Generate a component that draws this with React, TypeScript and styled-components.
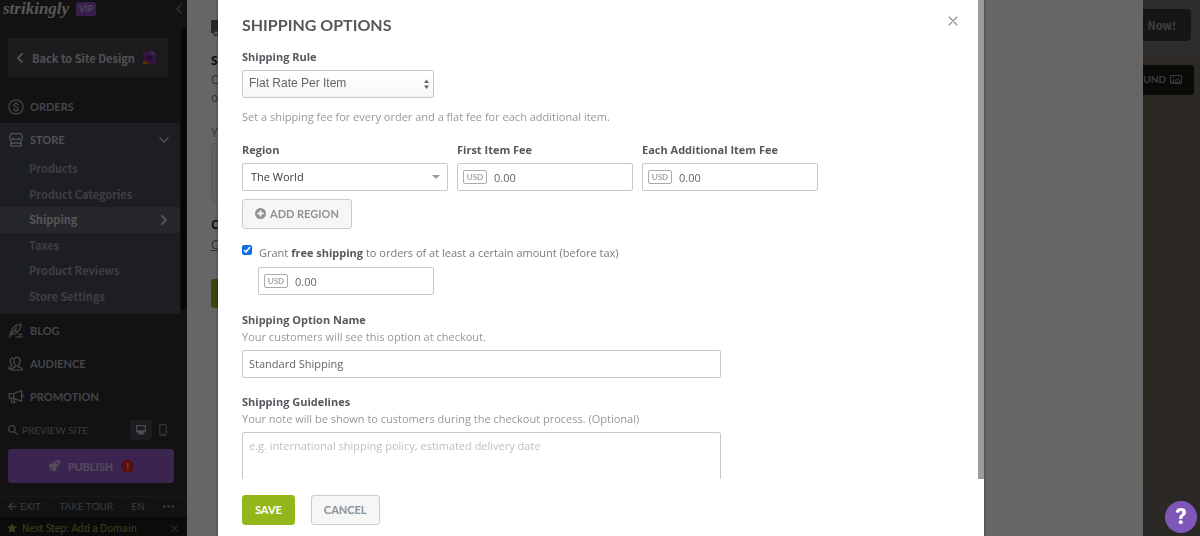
import React from "react";
import styled, { createGlobalStyle } from "styled-components";

const display = `Lato, "Liberation Sans", sans-serif`;
const body = `"Open Sans", "Liberation Sans", sans-serif`;
const menu = `"Noto Sans CJK SC", "Open Sans", sans-serif`;

const Global = createGlobalStyle`
  *, *::before, *::after { box-sizing: border-box; }
  html, body { margin: 0; height: 100%; overflow: hidden; }
  body { font-family: ${body}; font-size: 11px; line-height: 17px; color: #636569; background: #fff; }
  button, input, select, textarea { font: inherit; color: inherit; margin: 0; }
  svg { display: block; flex: none; }
`;

/* ---------- page shell ---------- */

const Shell = styled.div`
  display: grid;
  grid-template-columns: 187px minmax(0, 1fr) 57px;
  height: 100vh;
`;

const Sidebar = styled.aside`
  display: flex;
  flex-direction: column;
  min-height: 0;
  background: #2f2f31;
  color: #b3b4ba;
  overflow: hidden;
`;

const Brand = styled.header`
  display: flex;
  align-items: center;
  gap: 7px;
  height: 18px;
  padding: 0 5px 0 3px;
  & > svg { margin-left: auto; }
`;

const Wordmark = styled.span`
  font-family: "Liberation Serif", serif;
  font-style: italic;
  font-weight: 700;
  font-size: 17px;
  line-height: 18px;
  color: #d6d6da;
`;

const Vip = styled.span`
  width: 20px;
  height: 14px;
  border-radius: 2px;
  background: #8a50bd;
  color: #d9c6ee;
  font-family: ${display};
  font-size: 9px;
  line-height: 14px;
  text-align: center;
`;

const SideScroll = styled.div`
  display: grid;
  grid-template-columns: 180px 5px;
  gap: 1px;
  flex: 1;
  align-content: start;
  padding-top: 10px;
`;

const SideThumb = styled.div`
  height: 282px;
  border-radius: 3px;
  background: #101010;
`;

const SideNav = styled.nav`
  display: flex;
  flex-direction: column;
  padding-top: 10px;
`;

const BackLink = styled.a`
  display: flex;
  align-items: center;
  gap: 8px;
  height: 39px;
  margin: 0 12px 13px 8px;
  padding: 0 12px 0 9px;
  border-radius: 2px;
  background: #46484f;
  color: #c6c7cc;
  font-family: ${menu};
  font-weight: 700;
  font-size: 11px;
  line-height: 18px;
  text-decoration: none;
  white-space: nowrap;
  & > svg:last-child { margin-left: auto; }
`;

const MainLink = styled.a<{ $bright?: boolean }>`
  display: flex;
  align-items: center;
  gap: 6px;
  height: 33px;
  padding: 0 11px 0 8px;
  color: ${(p) => (p.$bright ? "#c9cad0" : "#a9abb2")};
  font-family: ${display};
  font-weight: 700;
  font-size: 11px;
  text-decoration: none;
  & > svg:nth-of-type(2) { margin-left: auto; }
`;

const Group = styled.div`
  padding-bottom: 5px;
  background: #494b54;
`;

const SubList = styled.div`
  display: grid;
  grid-auto-rows: 1fr;
  height: 153px;
`;

const SubLink = styled.a<{ $active?: boolean }>`
  display: flex;
  align-items: center;
  justify-content: space-between;
  padding: 0 12px 0 29px;
  background: ${(p) => (p.$active ? "#5d6169" : "transparent")};
  color: ${(p) => (p.$active ? "#d0d1d5" : "#9a9ca3")};
  font-family: ${menu};
  font-weight: 700;
  font-size: 11px;
  text-decoration: none;
`;

const PreviewRow = styled.div`
  display: flex;
  align-items: center;
  height: 20px;
  padding: 0 13px 0 8px;
  gap: 4px;
  font-family: ${display};
  font-size: 10px;
  color: #909298;
`;

const Device = styled.button<{ $on?: boolean }>`
  display: grid;
  place-items: center;
  width: 22px;
  height: 20px;
  padding: 0;
  border: 0;
  border-radius: 2px;
  background: ${(p) => (p.$on ? "#44464e" : "transparent")};
  color: ${(p) => (p.$on ? "#c2c2c8" : "#85878d")};
  &:first-of-type { margin-left: auto; margin-right: -4px; }
`;

const Publish = styled.button`
  display: flex;
  align-items: center;
  justify-content: center;
  gap: 8px;
  height: 34px;
  margin: 9px 13px 13px 8px;
  padding: 0;
  border: 0;
  border-radius: 3px;
  background: #955cc8;
  color: #cfc0df;
  font-family: ${display};
  font-weight: 700;
  font-size: 11px;
`;

const Alert = styled.span`
  width: 13px;
  height: 13px;
  border-radius: 50%;
  background: #e2242c;
  color: #ffd0d0;
  font-size: 10px;
  line-height: 13px;
`;

const SideFoot = styled.div`
  display: flex;
  align-items: center;
  justify-content: space-between;
  height: 21px;
  padding: 0 13px 2px 8px;
  border-top: 1px solid #3c3c40;
  font-family: ${display};
  font-size: 10px;
`;

const FootLink = styled.a`
  display: flex;
  align-items: center;
  gap: 3px;
  color: #909298;
  text-decoration: none;
`;

const NextStep = styled.div`
  display: flex;
  align-items: center;
  gap: 5px;
  height: 19px;
  padding: 3px 9px 0 7px;
  background: #1d1d20;
  color: #98a04a;
  font-family: ${menu};
  font-size: 10px;
  line-height: 16px;
  & > svg:last-child { margin-left: auto; }
`;

const Panel = styled.main`
  display: flex;
  flex-direction: column;
  padding: 20px 24px;
  background: #fff;
  color: #7b8188;
  font-size: 12px;
  line-height: 18px;
`;

const PanelTitle = styled.div`
  height: 32px;
  color: #5d666f;
`;

const PanelHeading = styled.h2`
  margin: 0;
  color: #24282e;
  font-size: 12px;
  line-height: 17px;
`;

const PanelText = styled.p<{ $spaced?: boolean }>`
  margin: ${(p) => (p.$spaced ? "17px" : "2px")} 0 0;
`;

const PanelBox = styled.div`
  width: 70%;
  height: 58px;
  margin: 1px 0 15px;
  border: 1px solid #e0e0e0;
  border-radius: 3px;
  background: #f4f4f4;
`;

const PanelLink = styled.a`
  margin-top: 3px;
  color: #7b8188;
`;

const PanelSave = styled.div`
  width: 80px;
  height: 29px;
  margin-top: 25px;
  border-radius: 3px;
  background: #93b71a;
`;

const SitePreview = styled.section`
  display: flex;
  flex-direction: column;
  align-items: flex-start;
  overflow: hidden;
  background: linear-gradient(#73655b, #6b645a 30%, #6b665c);
`;

const PreviewTop = styled.div`
  width: 100%;
  height: 57px;
  padding-top: 9px;
  background: #707070;
`;

const Upgrade = styled.button`
  display: flex;
  align-items: center;
  justify-content: flex-end;
  width: 48px;
  height: 32px;
  padding: 0 15px 0 0;
  border: 0;
  border-radius: 0 4px 4px 0;
  background: #33373b;
  color: #a0a0a0;
  font-family: ${menu};
  font-weight: 700;
  font-size: 11px;
`;

const Background = styled.button`
  display: flex;
  align-items: center;
  justify-content: flex-end;
  gap: 4px;
  width: 51px;
  height: 30px;
  margin-top: 8px;
  padding: 0 12px 2px 0;
  border: 0;
  border-radius: 0 3px 3px 0;
  background: #1b1916;
  color: #9b9b9b;
  font-family: ${display};
  font-weight: 700;
  font-size: 10px;
`;

/* ---------- dialog ---------- */

const Backdrop = styled.div`
  position: fixed;
  inset: 0;
  display: flex;
  justify-content: center;
  padding-left: 2px;
  background: rgba(0, 0, 0, 0.6);
`;

const Dialog = styled.form`
  display: flex;
  flex-direction: column;
  width: 100%;
  max-width: 766px;
  height: 100%;
  background: #fff;
  box-shadow: 0 0 3px rgba(0, 0, 0, 0.5);
`;

const DialogBody = styled.div`
  flex: 1;
  min-height: 0;
  overflow-y: auto;
  scrollbar-width: none;
  padding: 11px 15px 20px 24px;
  border-right: 6px solid #999c9a;
`;

const DialogHead = styled.div`
  display: flex;
  justify-content: space-between;
  align-items: flex-start;
  height: 37px;
`;

const Title = styled.h2`
  margin: 0;
  font-family: ${display};
  font-weight: 700;
  font-size: 16px;
  line-height: 28px;
  color: #55575b;
`;

const Close = styled.button`
  display: grid;
  place-items: center;
  width: 20px;
  height: 20px;
  padding: 0;
  border: 0;
  background: none;
  color: #88898c;
`;

const Label = styled.label`
  display: block;
  font-weight: 700;
  color: #55585d;
`;

const Hint = styled.p<{ $spaced?: boolean }>`
  margin: ${(p) => (p.$spaced ? "10px" : "0")} 0 0;
  color: #95989b;
`;

const Section = styled.div`
  max-width: 479px;
  margin-bottom: 15px;
`;

const SelectBox = styled.div<{ $soft?: boolean }>`
  position: relative;
  width: ${(p) => (p.$soft ? "192px" : "100%")};
  margin-top: 5px;
  & > svg {
    position: absolute;
    right: ${(p) => (p.$soft ? "5px" : "8px")};
    top: 50%;
    transform: translateY(-50%);
    pointer-events: none;
  }
`;

const Select = styled.select<{ $soft?: boolean }>`
  appearance: none;
  display: block;
  width: 100%;
  height: 28px;
  padding: 0 20px 2px ${(p) => (p.$soft ? "6px" : "8px")};
  border: 1px solid #c6c9cb;
  border-radius: 2px;
  background: ${(p) => (p.$soft ? "linear-gradient(#fff, #f6f6f6)" : "#fff")};
  color: ${(p) => (p.$soft ? "#636569" : "#3a3c40")};
  font-family: ${(p) => (p.$soft ? `"Liberation Sans", sans-serif` : body)};
  font-size: ${(p) => (p.$soft ? "12px" : "11px")};
`;

const Rates = styled.div`
  display: grid;
  grid-template-columns: 207fr 176fr 175fr;
  gap: 9px;
  max-width: 576px;
  margin: 16px 0 8px;
`;

const Money = styled.div`
  display: flex;
  align-items: center;
  gap: 7px;
  width: 100%;
  max-width: 176px;
  height: 28px;
  margin-top: 5px;
  padding: 0 5px;
  border: 1px solid #c6c9cb;
  border-radius: 2px;
`;

const Currency = styled.span`
  width: 24px;
  height: 14px;
  border: 1px solid #a9acae;
  border-radius: 2px;
  color: #a3a6a8;
  font-family: ${display};
  font-weight: 700;
  font-size: 8px;
  line-height: 12px;
  text-align: center;
`;

const MoneyInput = styled.input`
  flex: 1;
  min-width: 0;
  padding: 0;
  border: 0;
  outline: 0;
  background: none;
`;

const Button = styled.button<{ $primary?: boolean }>`
  display: inline-flex;
  align-items: center;
  gap: 4px;
  height: 30px;
  padding: 0 12px 2px;
  border: 1px solid ${(p) => (p.$primary ? "#93b71a" : "#c9cccd")};
  border-radius: 3px;
  background: ${(p) => (p.$primary ? "#93b71a" : "#f5f7f7")};
  color: ${(p) => (p.$primary ? "#fff" : "#8f9193")};
  font-family: ${display};
  font-weight: 700;
  font-size: 11px;
`;

const FreeShipping = styled.div`
  display: grid;
  grid-template-columns: 10px 1fr;
  gap: 1px 7px;
  margin: 15px 0 16px;
`;

const Check = styled.input`
  width: 10px;
  height: 10px;
  margin: 1px 0 0;
  accent-color: #0b6fe8;
`;

const CheckLabel = styled.label`
  color: #76797d;
  & > b { color: #55585d; }
`;

const FreeAmount = styled.div`
  grid-column: 2;
  margin-left: -1px;
`;

const TextInput = styled.input`
  display: block;
  width: 100%;
  height: 28px;
  margin-top: 5px;
  padding: 0 6px 2px;
  border: 1px solid #c6c9cb;
  border-radius: 2px;
`;

const TextArea = styled.textarea`
  display: block;
  width: 100%;
  height: 90px;
  margin-top: 5px;
  padding: 4px 6px;
  border: 1px solid #c6c9cb;
  border-radius: 2px;
  resize: none;
  &::placeholder { color: #bcbfc1; }
`;

const DialogFoot = styled.div`
  display: flex;
  gap: 16px;
  padding: 16px 24px 11px;
`;

const Help = styled.button`
  position: fixed;
  right: 3px;
  bottom: 3px;
  width: 32px;
  height: 32px;
  padding: 0;
  border: 0;
  border-radius: 50%;
  background: #7e57b8;
  color: #fff;
  font-family: Roboto, sans-serif;
  font-weight: 900;
  font-size: 22px;
  line-height: 32px;
`;

/* ---------- icons ---------- */

type IconProps = { d: string; w?: number; h?: number; box?: string; sw?: number; fill?: boolean; color?: string };

const Icon = ({ d, w = 16, h = w, box = `0 0 ${w} ${h}`, sw = 1.3, fill, color = "currentColor" }: IconProps) => (
  <svg width={w} height={h} viewBox={box} aria-hidden="true"
    fill={fill ? color : "none"} stroke={fill ? "none" : color}
    strokeWidth={sw} strokeLinecap="round" strokeLinejoin="round" fillRule="evenodd">
    <path d={d} />
  </svg>
);

const icons = {
  left: "M5 1 1 5l4 4",
  right: "M1 1l4 4-4 4",
  down: "M1 1l4 4 4-4",
  cross: "M1 1l8 8M9 1 1 9",
  orders: "M8 .9a7.1 7.1 0 1 0 0 14.2A7.1 7.1 0 0 0 8 .9M10.2 5.8C9.8 4.9 9 4.6 8 4.6c-1.300 0-2.200.6-2.200 1.600 0 2.300 4.500 1.200 4.500 3.500 0 1-.9 1.700-2.300 1.700-1.200 0-2.100-.5-2.400-1.400M8 3.300v1.300M8 11.400v1.300",
  store: "M3.800 1.700h8.400c.7 0 1.100.3 1.300.9l1 2.900c.1 1.500-.7 2.300-1.700 2.300-1.100 0-1.900-.8-2-1.900-.3 1.200-1.300 1.900-2.800 1.900S5.500 7.100 5.200 5.900c-.1 1.100-.9 1.900-2 1.900-1 0-1.800-.8-1.700-2.300l1-2.900c.2-.6.600-.9 1.300-.9M2.600 8.200v5.900h10.800V8.200M2.600 11h10.800",
  blog: "M1.500 14 3 9.500C4 5 7.500 2 13 1.200c-.2 3.300-1 5.300-2.700 6.800L7.500 8.500l2 .7C8 11 5.500 11.600 3 11.300M3 11.300 8.500 5M8 13.800h6M11 11.500h3",
  audience: "M9.400 9.700c2-1.300 2.800-3.300 2.600-5.500C11.800 2.300 10.700 1.200 9 1.200S6.200 2.300 6 4.200c-.2 2.200.6 4.200 1.600 5.200v1.300l-3.200 1.400c-.6.4-.9 1-.9 2h11c0-1-.4-1.600-1-2l-3.200-1.400zM5 2C3.200 1.800 2.200 3 2.200 4.800c0 1.800.6 3 1.500 3.900v1L1.500 11c-.5.400-.7 1-.7 1.800h2.500",
  promo: "M1.200 4.600h4.500v4.600H1.200zM5.700 4.600 13.600 1.400v11L5.700 9.200M3 9.300l1 4.300h2.800L5.900 9.500M13.600 5.600c1 .1 1.300.6 1.300 1.300s-.3 1.200-1.300 1.300",
  search: "M3.800.8a3.200 3.200 0 1 0 0 6.400 3.200 3.200 0 0 0 0-6.400M6.200 6.300l2.800 2.900",
  desktop: "M.8 0h8.400c.5 0 .8.3.8.8v5.900c0 .5-.3.8-.8.8H7.500L8 9v.6H2V9l.5-1.500H.8c-.5 0-.8-.3-.8-.8V.8C0 .3.300 0 .8 0M1.200 1.200v4h7.600v-4z",
  phone: "M1.800.7h4.400c.6 0 1 .4 1 1v8.600c0 .6-.4 1-1 1H1.800c-.6 0-1-.4-1-1V1.700c0-.6.4-1 1-1M3.400 9.600h1.200",
  rocket: "M12 0C8.500 0 6 1.300 4.500 3.600L2 4 0 6.600l2.700.3.4 1L1.400 9.800l.9.900 1.800-1.600 1 .4.300 2.500L8 10l.4-2.500C10.700 6 12 3.500 12 0M8.600 2.300a1.100 1.100 0 1 1 0 2.200 1.100 1.100 0 0 1 0-2.200",
  arrow: "M8 4.500H1M4 1.200.8 4.500 4 7.800",
  dots: "M0 1.500a1.300 1.300 0 1 1 2.600 0 1.300 1.300 0 0 1-2.600 0M4.200 1.500a1.300 1.300 0 1 1 2.600 0 1.300 1.300 0 0 1-2.600 0M8.400 1.500a1.300 1.300 0 1 1 2.600 0 1.300 1.300 0 0 1-2.600 0",
  star: "M5 0l1.500 3.300 3.500.4-2.600 2.400.7 3.600L5 7.900 1.900 9.700l.7-3.600L0 3.700l3.500-.4z",
  image: "M1 .6h10c.3 0 .5.2.5.5v6.800c0 .3-.2.5-.5.5H1a.5.500 0 0 1-.5-.5V1.100c0-.3.2-.5.5-.5M2.300 6.900l2-2.300 1.400 1.200L8 3.500l2 3.400zM3.300 2.700h.2",
  plus: "M5.500 0a5.500 5.500 0 1 1 0 11 5.500 5.500 0 0 1 0-11M4.600 2.400v2.200H2.400v1.800h2.200v2.200h1.800V6.400h2.200V4.600H6.400V2.400z",
  sort: "M0 4l2.500-3.500L5 4zM0 6.500h5L2.500 10z",
  caret: "M0 0h8L4 4z",
  truck: "M0 0h14v4h4l4 4v5h-2a3 3 0 0 1-6 0H8a3 3 0 0 1-6 0H0zM5 11.300a1.600 1.600 0 1 0 0 3.200 1.600 1.600 0 0 0 0-3.200",
};

const BackBadge = () => (
  <svg width="13" height="13" viewBox="0 0 13 13" aria-hidden="true">
    <path d="M1 0h8l4 4v9H1L0 12V1z" fill="#7c3aa8" />
    <path d="M8 0h1l4 4H8z" fill="#a766cf" />
    <path d="M0 5l4 2 3 6H0z" fill="#8c2c7c" />
    <path d="M0 9l4 1 4 3H0z" fill="#c03048" />
    <path d="M0 11l3-.5L5 13H0z" fill="#c89a28" />
    <path d="M3 4l3 1 4-1-1 4-3 2-3-3z" fill="#552680" />
  </svg>
);

/* ---------- parts ---------- */

const MoneyField = ({ id, label }: { id: string; label?: string }) => (
  <div>
    {label && <Label htmlFor={id}>{label}</Label>}
    <Money>
      <Currency>USD</Currency>
      <MoneyInput id={id} defaultValue="0.00" aria-label={label ? undefined : "Minimum order amount"} />
    </Money>
  </div>
);

const subItems = ["Products", "Product Categories", "Shipping", "Taxes", "Product Reviews", "Store Settings"];

export default function App() {
  return (
    <>
      <Global />
      <Shell>
        <Sidebar>
          <Brand>
            <Wordmark>strikingly</Wordmark>
            <Vip>VIP</Vip>
            <Icon d={icons.left} w={6} h={10} color="#7c7d83" />
          </Brand>
          <SideScroll>
            <SideNav>
              <BackLink href="#design">
                <Icon d={icons.left} w={7} h={10} sw={2} />
                Back to Site Design
                <BackBadge />
              </BackLink>
              <MainLink href="#orders"><Icon d={icons.orders} />ORDERS</MainLink>
              <Group>
                <MainLink href="#store" $bright>
                  <Icon d={icons.store} />STORE
                  <Icon d={icons.down} w={10} h={6} sw={1.6} />
                </MainLink>
                <SubList>
                  {subItems.map((name) => (
                    <SubLink key={name} href="#store" $active={name === "Shipping"}>
                      {name}
                      {name === "Shipping" && <Icon d={icons.right} w={7} h={10} sw={2} />}
                    </SubLink>
                  ))}
                </SubList>
              </Group>
              <MainLink href="#blog"><Icon d={icons.blog} />BLOG</MainLink>
              <MainLink href="#audience"><Icon d={icons.audience} />AUDIENCE</MainLink>
              <MainLink href="#promotion"><Icon d={icons.promo} />PROMOTION</MainLink>
            </SideNav>
            <SideThumb />
          </SideScroll>
          <PreviewRow>
            <Icon d={icons.search} w={10} sw={1.6} />
            PREVIEW SITE
            <Device type="button" $on aria-label="Desktop"><Icon d={icons.desktop} w={10} fill /></Device>
            <Device type="button" aria-label="Phone"><Icon d={icons.phone} w={8} h={12} /></Device>
          </PreviewRow>
          <Publish type="button">
            <Icon d={icons.rocket} w={12} fill />
            PUBLISH
            <Alert>!</Alert>
          </Publish>
          <SideFoot>
            <FootLink href="#exit"><Icon d={icons.arrow} w={9} sw={1.5} />EXIT</FootLink>
            <FootLink href="#tour">TAKE TOUR</FootLink>
            <FootLink href="#language">EN</FootLink>
            <FootLink href="#more" aria-label="More"><Icon d={icons.dots} w={11} h={3} fill /></FootLink>
          </SideFoot>
          <NextStep>
            <Icon d={icons.star} w={10} fill />
            Next Step: Add a Domain
            <Icon d={icons.cross} w={7} box="0 0 10 10" />
          </NextStep>
        </Sidebar>

        <Panel>
          <PanelTitle><Icon d={icons.truck} w={22} h={16} fill /></PanelTitle>
          <PanelHeading>S</PanelHeading>
          <PanelText>C<br />o</PanelText>
          <PanelText $spaced>Y</PanelText>
          <PanelBox />
          <PanelHeading>C</PanelHeading>
          <PanelLink href="#coupons">C</PanelLink>
          <PanelSave />
        </Panel>

        <SitePreview>
          <PreviewTop><Upgrade type="button">Now!</Upgrade></PreviewTop>
          <Background type="button">UND<Icon d={icons.image} w={12} h={9} sw={1} /></Background>
        </SitePreview>
      </Shell>

      <Backdrop>
        <Dialog role="dialog" aria-labelledby="dialog-title" onSubmit={(e) => e.preventDefault()}>
          <DialogBody>
            <DialogHead>
              <Title id="dialog-title">SHIPPING OPTIONS</Title>
              <Close type="button" aria-label="Close"><Icon d={icons.cross} w={10} sw={1.1} /></Close>
            </DialogHead>

            <Label htmlFor="rule">Shipping Rule</Label>
            <SelectBox $soft>
              <Select id="rule" $soft><option>Flat Rate Per Item</option></Select>
              <Icon d={icons.sort} w={5} h={10} fill />
            </SelectBox>
            <Hint $spaced>Set a shipping fee for every order and a flat fee for each additional item.</Hint>

            <Rates>
              <div>
                <Label htmlFor="region">Region</Label>
                <SelectBox>
                  <Select id="region"><option>The World</option></Select>
                  <Icon d={icons.caret} w={8} h={4} fill color="#999" />
                </SelectBox>
              </div>
              <MoneyField id="first" label="First Item Fee" />
              <MoneyField id="additional" label="Each Additional Item Fee" />
            </Rates>

            <Button type="button"><Icon d={icons.plus} w={11} fill />ADD REGION</Button>

            <FreeShipping>
              <Check id="free" type="checkbox" defaultChecked />
              <CheckLabel htmlFor="free">
                Grant <b>free shipping</b> to orders of at least a certain amount (before tax)
              </CheckLabel>
              <FreeAmount><MoneyField id="minimum" /></FreeAmount>
            </FreeShipping>

            <Section>
              <Label htmlFor="name">Shipping Option Name</Label>
              <Hint>Your customers will see this option at checkout.</Hint>
              <TextInput id="name" defaultValue="Standard Shipping" />
            </Section>

            <Section>
              <Label htmlFor="guidelines">Shipping Guidelines</Label>
              <Hint>Your note will be shown to customers during the checkout process. (Optional)</Hint>
              <TextArea id="guidelines" placeholder="e.g. international shipping policy, estimated delivery date" />
            </Section>
          </DialogBody>
          <DialogFoot>
            <Button type="submit" $primary>SAVE</Button>
            <Button type="button">CANCEL</Button>
          </DialogFoot>
        </Dialog>
      </Backdrop>
      <Help type="button" aria-label="Help">?</Help>
    </>
  );
}
